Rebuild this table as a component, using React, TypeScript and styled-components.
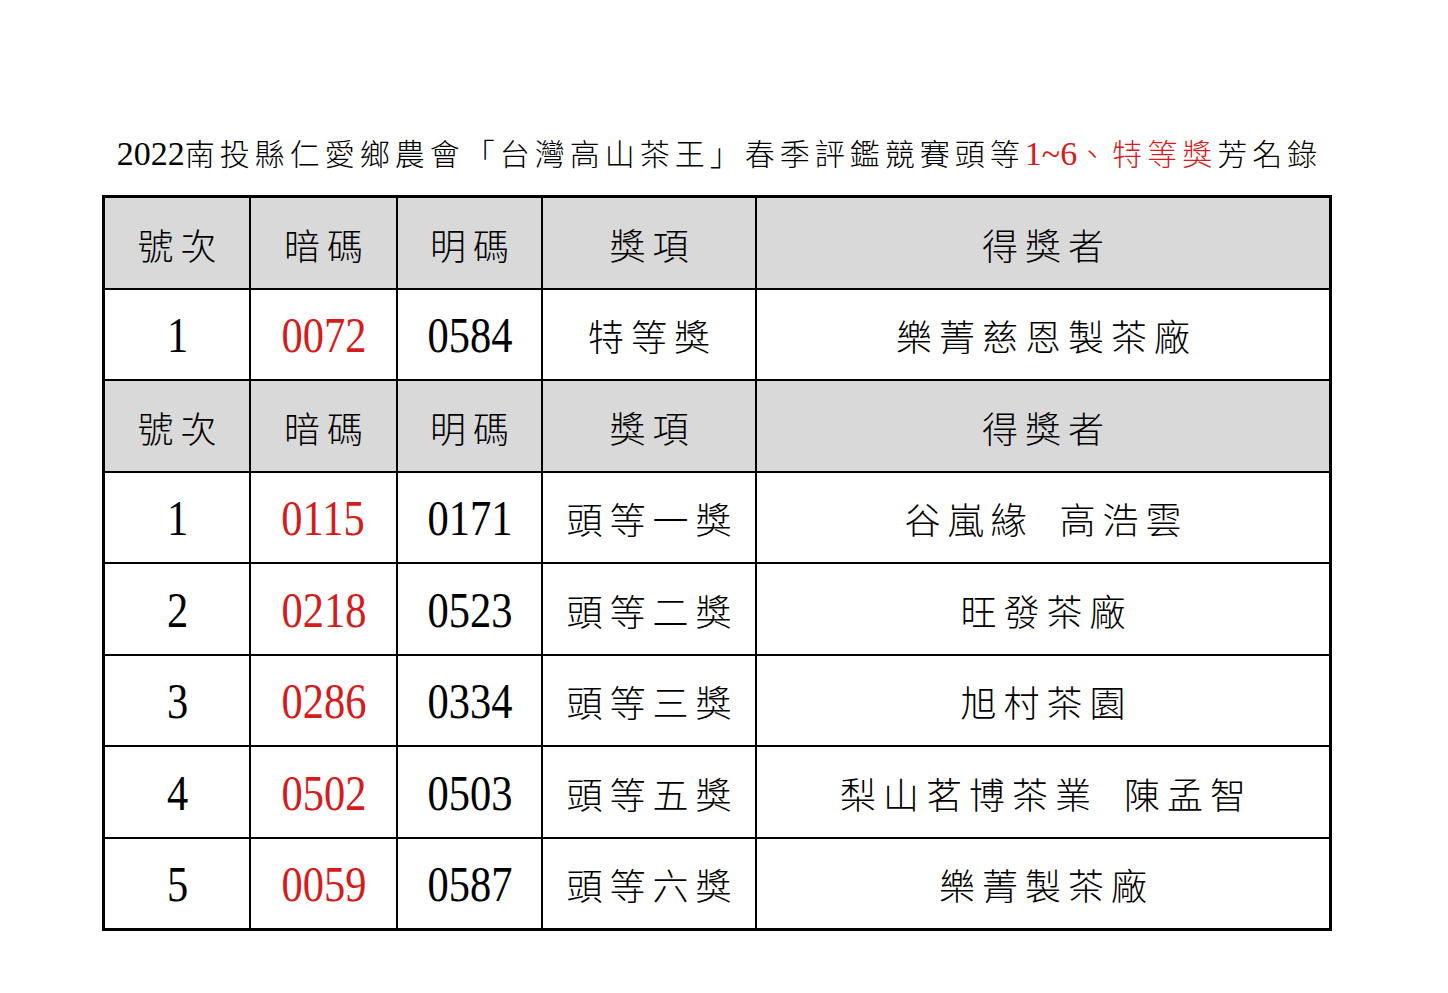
import React from 'react';
import styled, { createGlobalStyle } from 'styled-components';

const Global = createGlobalStyle`
  html, body { margin: 0; padding: 0; background: #fff; }
  body { font-family: "Noto Sans CJK TC", "Noto Sans", sans-serif; color: #000; }
`;

const Page = styled.div`
  width: 1448px;
  min-height: 993px;
  box-sizing: border-box;
  padding: 132px 0 0 102px;
`;

const Sheet = styled.div`
  width: 1230px;
`;

const Title = styled.h1`
  margin: 0 0 21px;
  font-size: 30px;
  font-weight: 300;
  line-height: 40px;
  letter-spacing: 5px;
  text-indent: 5px;
  text-align: center;
  white-space: nowrap;
`;

const Red = styled.span`
  color: #d41c1c;
`;

const TitleNum = styled.span`
  font-family: "Liberation Serif", "DejaVu Serif", "Times New Roman", serif;
  font-weight: 400;
  font-size: 34px;
  letter-spacing: 0;
`;

const Grid = styled.div`
  display: grid;
  grid-template-columns: 144px 145px 143px 212px 572px;
  grid-auto-rows: 89.5px;
  gap: 2px;
  border: 3px solid #000;
  background: #000;
`;

const Cell = styled.div<{ $head?: boolean }>`
  display: flex;
  align-items: center;
  justify-content: center;
  background: ${p => (p.$head ? '#d9d9d9' : '#fff')};
  font-size: 36px;
  font-weight: 300;
  letter-spacing: 7px;
  text-indent: 7px;
  word-spacing: 11px;
  padding-top: 2px;
  box-sizing: border-box;
  white-space: nowrap;
`;

const Num = styled.span<{ $red?: boolean }>`
  display: inline-block;
  font-family: "Liberation Serif", "DejaVu Serif", "Times New Roman", serif;
  font-weight: 400;
  font-size: 50px;
  line-height: 1;
  letter-spacing: 0;
  text-indent: 0;
  transform: scaleX(0.85);
  color: ${p => (p.$red ? '#d41c1c' : '#000')};
`;

type Row = { no: string; secret: string; code: string; award: string; winner: string };

const headers = ['號次', '暗碼', '明碼', '獎項', '得獎者'];

const special: Row[] = [
  { no: '1', secret: '0072', code: '0584', award: '特等獎', winner: '樂菁慈恩製茶廠' },
];

const first: Row[] = [
  { no: '1', secret: '0115', code: '0171', award: '頭等一獎', winner: '谷嵐緣 高浩雲' },
  { no: '2', secret: '0218', code: '0523', award: '頭等二獎', winner: '旺發茶廠' },
  { no: '3', secret: '0286', code: '0334', award: '頭等三獎', winner: '旭村茶園' },
  { no: '4', secret: '0502', code: '0503', award: '頭等五獎', winner: '梨山茗博茶業 陳孟智' },
  { no: '5', secret: '0059', code: '0587', award: '頭等六獎', winner: '樂菁製茶廠' },
];

const HeaderRow = () => (
  <>
    {headers.map(h => (
      <Cell $head key={h}>{h}</Cell>
    ))}
  </>
);

const DataRow = ({ r }: { r: Row }) => (
  <>
    <Cell><Num>{r.no}</Num></Cell>
    <Cell><Num $red>{r.secret}</Num></Cell>
    <Cell><Num>{r.code}</Num></Cell>
    <Cell>{r.award}</Cell>
    <Cell>{r.winner}</Cell>
  </>
);

export default function App() {
  return (
    <Page>
      <Global />
      <Sheet>
        <Title>
          <TitleNum>2022</TitleNum>南投縣仁愛鄉農會「台灣高山茶王」春季評鑑競賽頭等
          <Red><TitleNum>1~6</TitleNum>、特等獎</Red>芳名錄
        </Title>
        <Grid>
          <HeaderRow />
          {special.map(r => <DataRow key={'s' + r.secret} r={r} />)}
          <HeaderRow />
          {first.map(r => <DataRow key={'f' + r.secret} r={r} />)}
        </Grid>
      </Sheet>
    </Page>
  );
}
